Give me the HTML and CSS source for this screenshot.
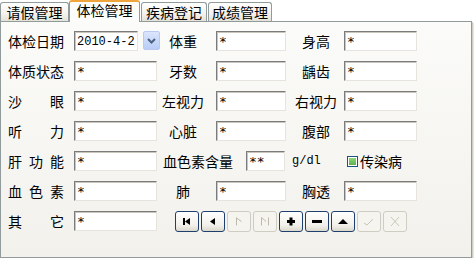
FILE: index.html
```html
<!DOCTYPE html>
<html>
<head>
	<meta charset="utf-8">
	<title>体检管理</title>
	<link rel="stylesheet" href="styles.css">
</head>
<body>

<div class="tabs">
	<div class="tab tab-1">请假管理</div>
	<div class="tab tab-2 active">体检管理</div>
	<div class="tab tab-3">疾病登记</div>
	<div class="tab tab-4">成绩管理</div>
</div>

<div class="page">
	<div class="row">
		<span class="lbl">体检日期</span>
		<input class="field date-field" value="2010-4-2">
		<span class="drop">
			<svg width="11" height="8" viewBox="0 0 11 8"><path d="M2 2 L5.5 5.5 L9 2" fill="none" stroke="#4d6185" stroke-width="2"/></svg>
		</span>
		<span class="lbl2 after-drop">体重</span>
		<input class="field f2" value="*">
		<span class="lbl3">身高</span>
		<input class="field f3" value="*">
	</div>
	<div class="row">
		<span class="lbl">体质状态</span>
		<input class="field f1" value="*">
		<span class="lbl2">牙数</span>
		<input class="field f2" value="*">
		<span class="lbl3">龋齿</span>
		<input class="field f3" value="*">
	</div>
	<div class="row">
		<span class="lbl">沙眼</span>
		<input class="field f1" value="*">
		<span class="lbl2">左视力</span>
		<input class="field f2" value="*">
		<span class="lbl3">右视力</span>
		<input class="field f3" value="*">
	</div>
	<div class="row">
		<span class="lbl">听力</span>
		<input class="field f1" value="*">
		<span class="lbl2">心脏</span>
		<input class="field f2" value="*">
		<span class="lbl3">腹部</span>
		<input class="field f3" value="*">
	</div>
	<div class="row">
		<span class="lbl">肝功能</span>
		<input class="field f1" value="*">
		<span class="lbl-hb">血色素含量</span>
		<input class="field f-hb" value="**">
		<span class="unit">g/dl</span>
		<span class="check"><span class="box"></span>传染病</span>
	</div>
	<div class="row">
		<span class="lbl">血色素</span>
		<input class="field f1" value="*">
		<span class="lbl2">肺</span>
		<input class="field f2" value="*">
		<span class="lbl3">胸透</span>
		<input class="field f3" value="*">
	</div>
	<div class="row">
		<span class="lbl">其它</span>
		<input class="field f1" value="*">
		<div class="nav">
			<button><svg width="22" height="19" viewBox="0 0 22 19"><rect x="7" y="6" width="2" height="7" fill="#000"/><path d="M9 9.5 L14 6 L14 13 Z" fill="#000"/></svg></button>
			<button><svg width="22" height="19" viewBox="0 0 22 19"><path d="M8 9.5 L13 6 L13 13 Z" fill="#000"/></svg></button>
			<button disabled><svg width="22" height="19" viewBox="0 0 22 19"><path d="M8.5 5.5 L8.5 13.5 M8.5 6 L13.5 9.5" fill="none" stroke="#bdbaac" stroke-width="1"/></svg></button>
			<button disabled><svg width="22" height="19" viewBox="0 0 22 19"><path d="M7.5 13.5 L7.5 5.5 L12 9.5 M14.5 5.5 L14.5 13.5" fill="none" stroke="#bdbaac" stroke-width="1"/></svg></button>
			<button><svg width="22" height="19" viewBox="0 0 22 19"><path d="M9.5 5.5 H12.5 V8 H15 V11 H12.5 V13.5 H9.5 V11 H7 V8 H9.5 Z" fill="#000"/></svg></button>
			<button><svg width="22" height="19" viewBox="0 0 22 19"><rect x="6" y="8" width="10" height="3" fill="#000"/></svg></button>
			<button><svg width="22" height="19" viewBox="0 0 22 19"><path d="M6 12 L11 7 L16 12 Z" fill="#000"/></svg></button>
			<button disabled><svg width="22" height="19" viewBox="0 0 22 19"><path d="M6 11 L9 13 L15 7" fill="none" stroke="#c9c6b8" stroke-width="1"/></svg></button>
			<button disabled><svg width="22" height="19" viewBox="0 0 22 19"><path d="M7 5 L15 14 M15 5 L7 14" fill="none" stroke="#c9c6b8" stroke-width="1"/></svg></button>
		</div>
	</div>
</div>

</body>
</html>
```

FILE: styles.css
```css
body {
	margin: 0;
	background: white;
	font-family: "Noto Sans CJK SC", sans-serif;
	font-size: 14px;
	color: black;
}

/* --------------- tabs */

.tabs {
	display: flex;
	align-items: flex-end;
	height: 21px;
}
.tab {
	box-sizing: border-box;
	height: 19px;
	border: 1px solid #919b9c;
	border-bottom: none;
	border-radius: 3px 3px 0 0;
	background: linear-gradient(#ffffff, #f3f2ed 60%, #e4e2d8);
	text-align: center;
	line-height: 18px;
}
.tab-1 { width: 69px; }
.tab-2 { width: 71px; }
.tab-3 { width: 66px; margin-left: 1px; }
.tab-4 { width: 64px; margin-left: 1px; }

.tab.active {
	position: relative;
	z-index: 2;
	height: 22px;
	margin-bottom: -1px;
	border-top: 2px solid #f0a53c;
	background: #fcfcfb;
	line-height: 17px;
	padding-bottom: 3px;
}

/* --------------- page */

.page {
	box-sizing: border-box;
	width: 472px;
	height: 237px;
	border: 1px solid #919b9c;
	background: linear-gradient(#fbfbf9, #f2f1ec);
	box-shadow: 1px 1px 0 #d0cdc2, 2px 2px 0 #e8e6df;
	padding: 9px 0 0 7px;
}

.row {
	display: flex;
	align-items: center;
	height: 20px;
	margin-bottom: 10px;
}

.lbl {
	width: 56px;
	margin-right: 10px;
	text-align: justify;
	text-align-last: justify;
	white-space: nowrap;
}
.lbl2 {
	width: 46px;
	margin-left: 3px;
	margin-right: 10px;
	text-align: center;
	white-space: nowrap;
}
.lbl2.after-drop { margin-left: 0; }
.lbl3 {
	width: 44px;
	margin-left: 8px;
	margin-right: 6px;
	text-align: center;
	white-space: nowrap;
}

.field {
	box-sizing: border-box;
	height: 20px;
	margin: 0;
	padding: 1px 0 0 2px;
	border: 1px solid;
	border-color: #7b7b7b #e6e4dc #e6e4dc #7b7b7b;
	box-shadow: inset 1px 1px 0 #c9c7bd;
	background: white;
	font-family: "DejaVu Sans Mono", monospace;
	font-size: 13px;
	color: black;
	outline: none;
}
.f1 { width: 83px; }
.f2 { width: 70px; }
.f3 { width: 73px; }

.date-field {
	width: 64px;
	font-family: "Liberation Mono", monospace;
	font-size: 12px;
}
.drop {
	box-sizing: border-box;
	width: 17px;
	height: 19px;
	margin-left: 5px;
	margin-top: -1px;
	border: 1px solid #b9c9ef;
	border-radius: 2px;
	background: linear-gradient(#dbe5fc, #b9cdf7);
	display: flex;
	align-items: center;
	justify-content: center;
}

.lbl-hb {
	width: 70px;
	margin-left: 6px;
	margin-right: 13px;
	white-space: nowrap;
}
.f-hb { width: 39px; }
.unit {
	margin-left: 7px;
	font-family: "Liberation Mono", monospace;
	font-size: 12px;
	width: 29px;
}
.check {
	display: flex;
	align-items: center;
	margin-left: 26px;
}
.box {
	box-sizing: border-box;
	width: 11px;
	height: 11px;
	margin-right: 2px;
	border: 1px solid #1c5180;
	background: white;
	padding: 1px;
}
.box::after {
	content: "";
	display: block;
	width: 7px;
	height: 7px;
	background: linear-gradient(#8dd67a, #5fb04a);
}

/* --------------- navigator */

.nav {
	display: flex;
	gap: 2px;
	margin-left: 18px;
	margin-top: 1px;
}
.nav button {
	box-sizing: border-box;
	width: 24px;
	height: 21px;
	padding: 0;
	border: 1px solid #1f3f6f;
	border-radius: 3px;
	background: linear-gradient(#ffffff, #f1f0ea 70%, #dcd8cc);
	display: flex;
	align-items: center;
	justify-content: center;
}
.nav button:disabled {
	border-color: #cfcdc2;
	background: #f5f4ef;
}
```
